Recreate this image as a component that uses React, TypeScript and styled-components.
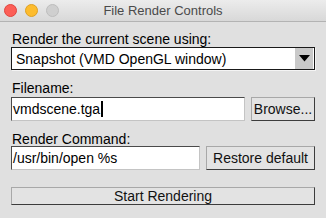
import React from "react";
import styled, { createGlobalStyle } from "styled-components";

const Global = createGlobalStyle`
  html, body { margin: 0; padding: 0; background: #e0e0e0; }
  body { width: 326px; height: 218px; overflow: hidden; font-family: "Liberation Sans", Arial, sans-serif; }
`;

const Window = styled.div`
  width: 326px;
  height: 218px;
  display: flex;
  flex-direction: column;
  background: #e0e0e0;
`;

const TitleBar = styled.div`
  height: 21px;
  border-bottom: 1px solid #b3b3b3;
  background: linear-gradient(#ececec, #d8d8d8);
  display: flex;
  align-items: center;
  position: relative;
  padding-left: 4px;
  gap: 8px;
`;

const Light = styled.span<{ $c: string; $b: string }>`
  width: 11px;
  height: 11px;
  border-radius: 50%;
  background: ${(p) => p.$c};
  border: 0.5px solid ${(p) => p.$b};
`;

const Title = styled.div`
  position: absolute;
  left: 0;
  right: 0;
  top: 0;
  height: 21px;
  line-height: 21px;
  text-align: center;
  font-family: "Liberation Sans", Arial, sans-serif;
  font-size: 13px;
  color: #4a4a4a;
  pointer-events: none;
`;

const Body = styled.div`
  padding: 10px 11px 0 11px;
  display: flex;
  flex-direction: column;
`;

const Field = styled.div<{ $top: number; $gap: number }>`
  margin-top: ${(p) => p.$top}px;
  display: flex;
  flex-direction: column;
  gap: ${(p) => p.$gap}px;
`;

const Label = styled.div`
  font-size: 14px;
  line-height: 14px;
  height: 14px;
  color: #000;
  padding-left: 1px;
`;

const Row = styled.div`
  display: flex;
  gap: 6px;
  height: 24px;
`;

const Choice = styled.div`
  height: 23px;
  box-sizing: border-box;
  background: #fff;
  border: 1px solid #1a1a1a;
  box-shadow: 1px 1px 0 #f4f4f4;
  display: flex;
  align-items: center;
  font-size: 14px;
  position: relative;
`;

const ChoiceText = styled.span`
  flex: 1;
  padding-left: 4px;
`;

const Arrow = styled.div`
  width: 18px;
  height: 21px;
  margin-right: 1px;
  background: #c9c9c9;
  display: flex;
  align-items: center;
  justify-content: center;
`;

const Input = styled.div<{ $w: number }>`
  width: ${(p) => p.$w}px;
  box-sizing: border-box;
  height: 24px;
  background: #fff;
  border-top: 1px solid #4a4a4a;
  border-left: 1px solid #4a4a4a;
  border-right: 1px solid #c4c4c4;
  border-bottom: 1px solid #c4c4c4;
  font-size: 14px;
  padding-left: 1px;
  display: flex;
  align-items: center;
  white-space: nowrap;
`;

const Caret = styled.span`
  display: inline-block;
  width: 2px;
  height: 16px;
  background: #000;
  margin-left: 1px;
`;

const Button = styled.div<{ $h?: number }>`
  flex: 1;
  box-sizing: border-box;
  height: ${(p) => p.$h ?? 24}px;
  background: #e3e3e3;
  border-top: 1px solid #a8a8a8;
  border-left: 1px solid #a8a8a8;
  border-right: 1px solid #3c3c3c;
  border-bottom: 1px solid #3c3c3c;
  font-size: 14px;
  display: flex;
  align-items: center;
  justify-content: center;
  color: #111;
`;

export default function App() {
  return (
    <Window>
      <Global />
      <TitleBar>
        <Light $c="#fc5f57" $b="#e0443e" />
        <Light $c="#fdbc2e" $b="#dea123" />
        <Light $c="#cfcfcf" $b="#bdbdbd" />
        <Title>File Render Controls</Title>
      </TitleBar>
      <Body>
        <Field $top={0} $gap={1}>
          <Label>Render the current scene using:</Label>
          <Choice>
            <ChoiceText>Snapshot (VMD OpenGL window)</ChoiceText>
            <Arrow>
              <svg width="11" height="7" viewBox="0 0 11 7">
                <polygon points="0,0 11,0 5.5,6.5" fill="#000" />
              </svg>
            </Arrow>
          </Choice>
        </Field>
        <Field $top={11} $gap={2}>
          <Label>Filename:</Label>
          <Row>
            <Input $w={234}>
              vmdscene.tga
              <Caret />
            </Input>
            <Button>Browse...</Button>
          </Row>
        </Field>
        <Field $top={11} $gap={0}>
          <Label>Render Command:</Label>
          <Row>
            <Input $w={189}>/usr/bin/open %s</Input>
            <Button>Restore default</Button>
          </Row>
        </Field>
        <Field $top={17} $gap={0}>
          <Button $h={23}>Start Rendering</Button>
        </Field>
      </Body>
    </Window>
  );
}
